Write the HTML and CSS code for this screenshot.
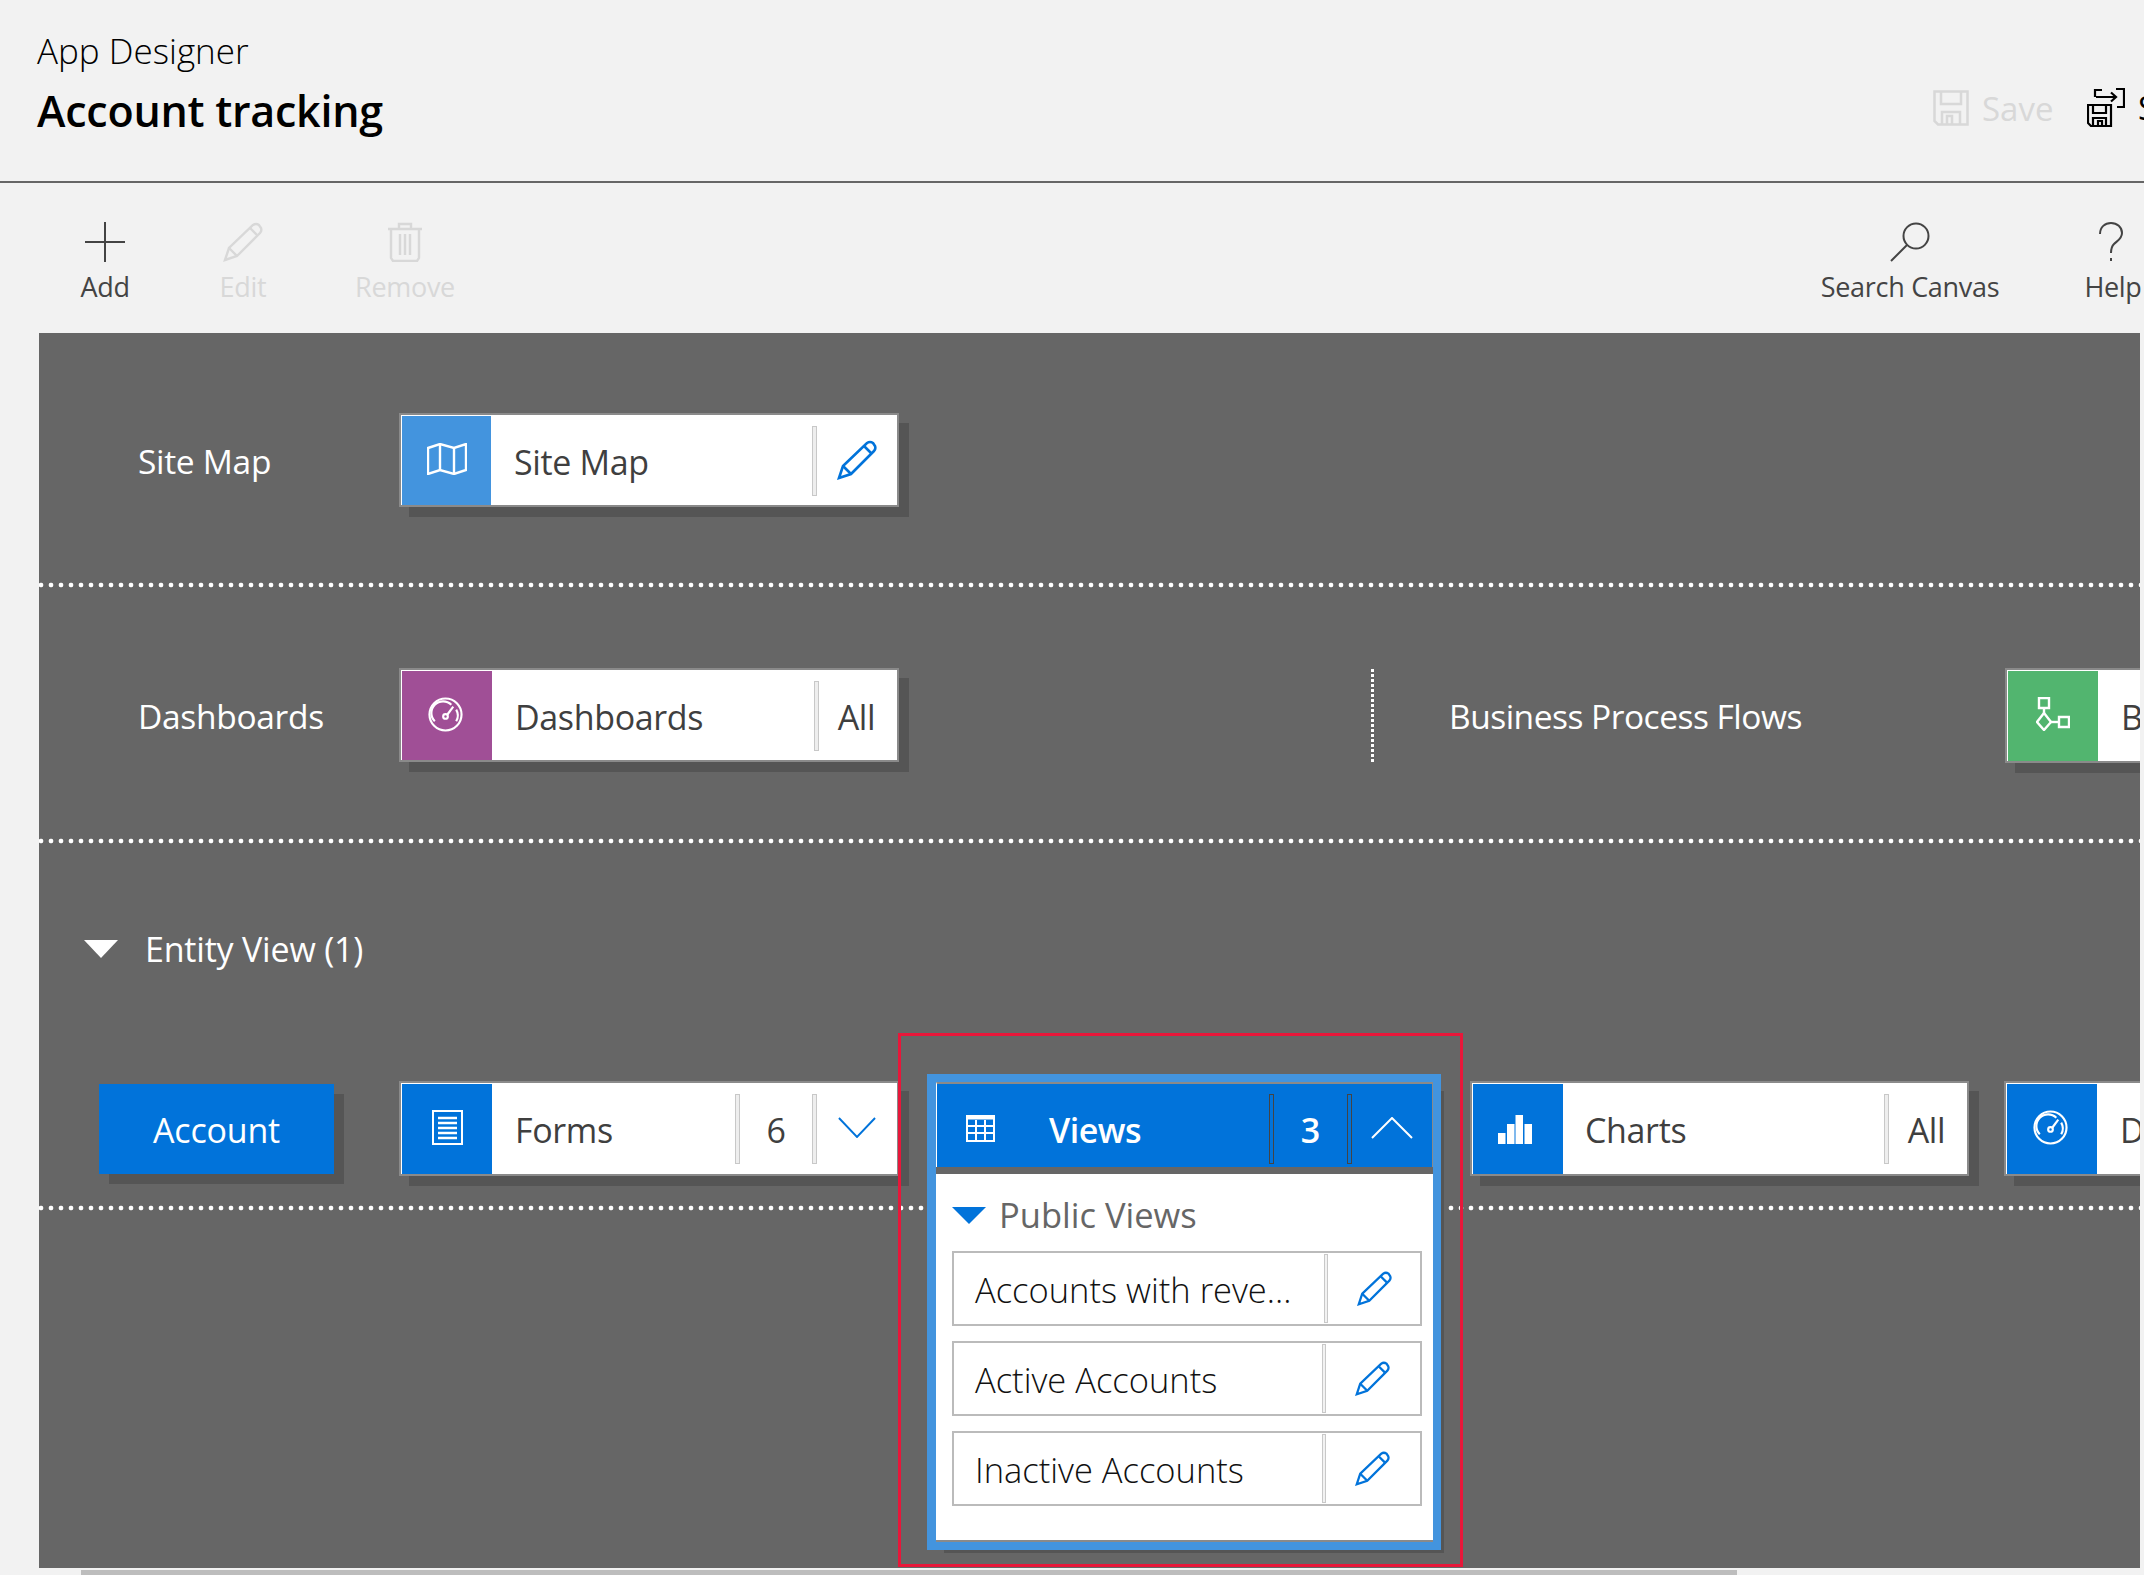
FILE: index.html
```html
<!DOCTYPE html>
<html lang="en">

<head>
    <meta charset="UTF-8">
    <meta name="viewport" content="width=device-width, initial-scale=1.0">
    <title>App Designer</title>
    <link rel="stylesheet" href="styles.css">
</head>

<body>
    <div class="page">

        <!-- title bar -->
        <header class="header">
            <div class="title-block">
                <div class="app-name">App Designer</div>
                <h1 class="app-title">Account tracking</h1>
            </div>
            <div class="save-actions">
                <svg class="save-icon" viewBox="0 0 36 36" fill="none" stroke="#d8d8d8" stroke-width="2.5">
                    <path d="M1.5 1.5H34.5V34.5H5L1.5 31Z" />
                    <path d="M8 1.5V14H28V1.5" />
                    <path d="M9 34.5V22H27V34.5" />
                    <path d="M14 34V26H19V34" />
                </svg>
                <span class="save-label">Save</span>
                <svg class="save-as-icon" viewBox="0 0 38 40" fill="none" stroke="#000" stroke-width="2.2">
                    <path d="M8 9V2H15" />
                    <path d="M29 1H37V19H30" />
                    <path d="M9 9H29M24 4.5L29 9L24 13.5" />
                    <path d="M1 17H24V38H4L1 35Z" />
                    <path d="M6 17V25H19V17" />
                    <path d="M6 38V30H19V38" />
                    <path d="M11 38V33H15V38" />
                </svg>
                <span class="save-as-label">Save As</span>
            </div>
        </header>

        <!-- command bar -->
        <nav class="toolbar">
            <div class="tool tool-add">
                <svg class="tool-icon" viewBox="0 0 40 40" fill="none" stroke="#444" stroke-width="2">
                    <path d="M0 20H40M20 0V40" />
                </svg>
                <span>Add</span>
            </div>
            <div class="tool tool-edit is-disabled">
                <svg class="tool-icon" viewBox="0 0 40 40" fill="none" stroke="#d8d8d8" stroke-width="2.4">
                    <path d="M2 38L6 26L30 3Q33 1 36 3L38 6Q39 9 37 11L14 34Z" />
                    <path d="M6 26L14 34M27 6L34 13" />
                </svg>
                <span>Edit</span>
            </div>
            <div class="tool tool-remove is-disabled">
                <svg class="tool-icon" viewBox="0 0 40 40" fill="none" stroke="#d8d8d8" stroke-width="2.4">
                    <path d="M3 7H37M14 7V2H26V7" />
                    <path d="M6 7V36L8 39H32L34 36V7" />
                    <path d="M15 12V33M20 12V33M25 12V33" />
                </svg>
                <span>Remove</span>
            </div>
            <div class="tool tool-search">
                <svg class="tool-icon" viewBox="0 0 40 40" fill="none" stroke="#444" stroke-width="2">
                    <circle cx="26" cy="14" r="12.5" />
                    <path d="M17 23L1 39" />
                </svg>
                <span>Search Canvas</span>
            </div>
            <div class="tool tool-help">
                <svg class="tool-icon" viewBox="0 0 24 40" fill="none" stroke="#444" stroke-width="2">
                    <path d="M1 12C1 5 6 1 12 1C18 1 23 5 23 11C23 17 18 19 15 22C13 24 12 26 12 31" />
                    <path d="M12 36V39" />
                </svg>
                <span>Help</span>
            </div>
        </nav>

        <!-- designer canvas -->
        <main class="canvas">

            <section class="lane">
                <div class="lane-label">Site Map</div>
                <div class="card card-short">
                    <div class="card-icon bg-sky">
                        <svg class="icon-map" viewBox="0 0 40 32" fill="none" stroke="#fff" stroke-width="2.4">
                            <path d="M1 5L13 1L27 5L39 1V27L27 31L13 27L1 31Z" />
                            <path d="M13 1V27M27 5V31" />
                        </svg>
                    </div>
                    <div class="card-name">Site Map</div>
                    <span class="sep"></span>
                    <div class="card-cell card-cell-end">
                        <svg class="icon-pencil" viewBox="0 0 40 40" fill="none" stroke="#0173da" stroke-width="2.6">
                            <path d="M2 38L6 26L30 3Q33 1 36 3L38 6Q39 9 37 11L14 34Z" />
                            <path d="M6 26L14 34M27 6L34 13" />
                        </svg>
                    </div>
                </div>
            </section>

            <div class="dots"></div>

            <section class="lane lane-tall">
                <div class="lane-label">Dashboards</div>
                <div class="card card-short">
                    <div class="card-icon card-icon-wide bg-purple">
                        <svg class="icon-gauge" viewBox="0 0 36 36" fill="none" stroke="#fff" stroke-width="2.2">
                            <circle cx="18" cy="18" r="16.5" />
                            <path d="M7 25A12 12 0 0 1 24 8" />
                            <path d="M29 13A12 12 0 0 1 29 25" />
                            <circle cx="18" cy="20" r="2.4" />
                            <path d="M20 18L26 10" />
                        </svg>
                    </div>
                    <div class="card-name">Dashboards</div>
                    <span class="sep"></span>
                    <div class="card-cell card-cell-all">All</div>
                </div>
                <div class="dots-vertical"></div>
                <div class="lane-label lane-label-bpf">Business Process Flows</div>
                <div class="card card-cut">
                    <div class="card-icon card-icon-wide bg-green">
                        <svg class="icon-flow" viewBox="0 0 34 34" fill="none" stroke="#fff" stroke-width="2.4">
                            <path d="M3 1H13V11H3Z" />
                            <path d="M8 11V16" />
                            <path d="M8 16L15 25L8 33L1 25Z" />
                            <path d="M15 25H23" />
                            <path d="M23 20H33V30H23Z" />
                        </svg>
                    </div>
                    <div class="card-name">Business Process Flows</div>
                </div>
            </section>

            <div class="dots"></div>

            <section class="entity">
                <div class="entity-head">
                    <svg class="entity-arrow" viewBox="0 0 34 18"><polygon points="0,0 34,0 17,18" fill="#fff" /></svg>
                    <span>Entity View (1)</span>
                </div>
                <div class="entity-row">
                    <div class="entity-button">Account</div>
                    <div class="card">
                        <div class="card-icon card-icon-wide bg-blue">
                            <svg class="icon-form" viewBox="0 0 31 35" fill="none" stroke="#fff" stroke-width="2">
                                <path d="M1 1H30V34H1Z" />
                                <path d="M6 8H25M6 13H25M6 18H25M6 23H25M6 28H25" stroke-width="2.4" />
                            </svg>
                        </div>
                        <div class="card-name">Forms</div>
                        <span class="sep"></span>
                        <div class="card-cell card-cell-count">6</div>
                        <span class="sep"></span>
                        <div class="card-cell card-cell-end">
                            <svg class="icon-chevron" viewBox="0 0 40 22" fill="none" stroke="#0173da" stroke-width="2">
                                <path d="M1 1L20 21L39 1" />
                            </svg>
                        </div>
                    </div>

                    <div class="popup-slot">
                        <div class="popup">
                            <div class="popup-head">
                                <svg class="icon-grid" viewBox="0 0 29 27" fill="none" stroke="#fff" stroke-width="2">
                                    <path d="M1 1H28V26H1Z" />
                                    <path d="M1 3H28" stroke-width="3" />
                                    <path d="M1 11H28M1 18H28M10 5V26M19 5V26" />
                                </svg>
                                <div class="popup-name">Views</div>
                                <span class="sep sep-dark"></span>
                                <div class="popup-count">3</div>
                                <span class="sep sep-dark"></span>
                                <div class="popup-toggle">
                                    <svg class="icon-chevron-up" viewBox="0 0 42 22" fill="none" stroke="#fff" stroke-width="2">
                                        <path d="M1 21L21 1L41 21" />
                                    </svg>
                                </div>
                            </div>
                            <div class="popup-body">
                                <div class="group-head">
                                    <svg class="group-arrow" viewBox="0 0 34 17"><polygon points="0,0 34,0 17,17" fill="#0173da" /></svg>
                                    <span>Public Views</span>
                                </div>
                                <div class="view-list">
                                    <div class="view-row view-row-long">
                                        <div class="view-name">Accounts with reve...</div>
                                        <span class="view-sep"></span>
                                        <div class="view-edit">
                                            <svg class="icon-pencil-small" viewBox="0 0 40 40" fill="none" stroke="#0173da" stroke-width="2.6">
                                                <path d="M2 38L6 26L30 3Q33 1 36 3L38 6Q39 9 37 11L14 34Z" />
                                                <path d="M6 26L14 34M27 6L34 13" />
                                            </svg>
                                        </div>
                                    </div>
                                    <div class="view-row">
                                        <div class="view-name">Active Accounts</div>
                                        <span class="view-sep"></span>
                                        <div class="view-edit">
                                            <svg class="icon-pencil-small" viewBox="0 0 40 40" fill="none" stroke="#0173da" stroke-width="2.6">
                                                <path d="M2 38L6 26L30 3Q33 1 36 3L38 6Q39 9 37 11L14 34Z" />
                                                <path d="M6 26L14 34M27 6L34 13" />
                                            </svg>
                                        </div>
                                    </div>
                                    <div class="view-row">
                                        <div class="view-name">Inactive Accounts</div>
                                        <span class="view-sep"></span>
                                        <div class="view-edit">
                                            <svg class="icon-pencil-small" viewBox="0 0 40 40" fill="none" stroke="#0173da" stroke-width="2.6">
                                                <path d="M2 38L6 26L30 3Q33 1 36 3L38 6Q39 9 37 11L14 34Z" />
                                                <path d="M6 26L14 34M27 6L34 13" />
                                            </svg>
                                        </div>
                                    </div>
                                </div>
                            </div>
                        </div>
                        <div class="callout"></div>
                    </div>

                    <div class="card card-charts">
                        <div class="card-icon card-icon-wide bg-blue">
                            <svg class="icon-bars" viewBox="0 0 34 29" fill="#fff">
                                <rect x="0" y="18" width="7.5" height="11" />
                                <rect x="9" y="9" width="7.5" height="20" />
                                <rect x="17.5" y="0" width="7.5" height="29" />
                                <rect x="26.5" y="9" width="7.5" height="20" />
                            </svg>
                        </div>
                        <div class="card-name">Charts</div>
                        <span class="sep"></span>
                        <div class="card-cell card-cell-all">All</div>
                    </div>
                    <div class="card card-cut">
                        <div class="card-icon card-icon-wide bg-blue">
                            <svg class="icon-gauge" viewBox="0 0 36 36" fill="none" stroke="#fff" stroke-width="2.2">
                                <circle cx="18" cy="18" r="16.5" />
                                <path d="M7 25A12 12 0 0 1 24 8" />
                                <path d="M29 13A12 12 0 0 1 29 25" />
                                <circle cx="18" cy="20" r="2.4" />
                                <path d="M20 18L26 10" />
                            </svg>
                        </div>
                        <div class="card-name">Dashboards</div>
                    </div>
                </div>
            </section>

            <div class="dots dots-last"></div>
        </main>

        <div class="scroll-track">
            <div class="scroll-thumb"></div>
        </div>
    </div>
</body>

</html>
```

FILE: styles.css
```css
html,
body {
    margin: 0;
    padding: 0;
}

body {
    background-color: #f2f2f2;
    font-family: "Open Sans", "Noto Sans", sans-serif;
    overflow: hidden;
}

.page {
    width: 2144px;
    height: 1575px;
    overflow: hidden;
}

/* title bar */
.header {
    display: flex;
    justify-content: space-between;
    height: 181px;
    border-bottom: 2px solid #666;
    padding-left: 37px;
}

.title-block {
    padding-top: 26px;
}

.app-name {
    font-size: 35px;
    line-height: 50px;
    font-weight: 300;
    color: #000;
}

.app-title {
    margin: 5px 0 0;
    font-size: 43px;
    line-height: 60px;
    font-weight: 600;
    letter-spacing: -0.25px;
    color: #000;
}

.save-actions {
    display: flex;
    flex-shrink: 0;
    align-items: center;
    width: 211px;
    height: 39px;
    margin-top: 88px;
    overflow: hidden;
    white-space: nowrap;
    font-size: 33px;
}

.save-icon {
    width: 36px;
    height: 36px;
    flex-shrink: 0;
    margin-right: 13px;
}

.save-label {
    width: 70px;
    flex-shrink: 0;
    margin-top: 2px;
    color: #d8d8d8;
}

.save-as-icon {
    width: 38px;
    height: 40px;
    flex-shrink: 0;
    margin-left: 35px;
    margin-right: 13px;
}

/* command bar */
.toolbar {
    display: flex;
    height: 150px;
}

.tool {
    display: flex;
    flex-direction: column;
    flex-shrink: 0;
    align-items: center;
    padding-top: 39px;
    font-size: 27px;
    line-height: 36px;
    letter-spacing: -0.3px;
    color: #444;
    white-space: nowrap;
}

.tool-icon {
    width: 40px;
    height: 40px;
    margin-bottom: 7px;
}

.is-disabled {
    color: #d8d8d8;
}

.tool-add {
    width: 90px;
    margin-left: 60px;
}

.tool-edit {
    width: 186px;
}

.tool-remove {
    width: 138px;
}

.tool-search {
    width: 200px;
    margin-left: 1336px;
}

.tool-help {
    width: 206px;
}

.tool-help .tool-icon {
    width: 24px;
    margin-left: -4px;
}

/* canvas */
.canvas {
    width: 2101px;
    height: 1235px;
    margin-left: 39px;
    background-color: #666;
    overflow: hidden;
}

.lane {
    display: flex;
    height: 169px;
    padding-top: 80px;
    padding-left: 99px;
    width: 2200px;
}

.lane-tall {
    height: 170px;
}

.lane-label {
    width: 261px;
    flex-shrink: 0;
    font-size: 33.5px;
    line-height: 97px;
    letter-spacing: -0.3px;
    color: #fff;
}

.lane-label-bpf {
    width: 556px;
    letter-spacing: -0.5px;
}

.dots {
    height: 6px;
    background: radial-gradient(circle at center, #fff 2px, transparent 2.7px) -3px center / 10px 6px repeat-x;
}

.dots-last {
    margin-top: 29px;
}

.dots-vertical {
    width: 5px;
    height: 95px;
    flex-shrink: 0;
    margin-left: 471px;
    margin-right: 74px;
    background: radial-gradient(circle at center, #fff 1.6px, transparent 2px) center top / 5px 5px repeat-y;
}

/* cards */
.card {
    display: flex;
    flex-shrink: 0;
    box-sizing: border-box;
    width: 500px;
    height: 95px;
    border: 2px solid #8a8a8a;
    background-color: #fff;
    box-shadow: 10px 10px 0 #555;
    font-size: 34px;
    letter-spacing: -0.35px;
    color: #3f3f3f;
    white-space: nowrap;
    overflow: visible;
}

.card-short {
    height: 94px;
}

.card-cut {
    width: 400px;
    overflow: hidden;
}

.card-charts {
    width: 499px;
    margin-right: 35px;
}

.card-charts .card-name {
    padding-left: 22px;
}

.card-icon {
    display: flex;
    flex-shrink: 0;
    align-items: center;
    justify-content: center;
    width: 89px;
    margin: 1px 0 0 1px;
}

.card-icon-wide {
    width: 90px;
}

.bg-sky {
    background-color: #4394de;
}

.bg-purple {
    background-color: #a04f96;
}

.bg-green {
    background-color: #52b56f;
}

.bg-blue {
    background-color: #0173da;
}

.card-name {
    flex: 1;
    padding-left: 23px;
    line-height: 95px;
}

.sep {
    flex-shrink: 0;
    box-sizing: border-box;
    width: 5px;
    height: 70px;
    margin-top: 11px;
    border: 1px solid #c8c8c8;
    background-color: #eee;
}

.sep-dark {
    margin-top: 10px;
    border-color: #444;
    background-color: #0173da;
}

.card-cell {
    flex-shrink: 0;
    text-align: center;
    line-height: 95px;
}

.card-cell-end {
    display: flex;
    align-items: center;
    justify-content: center;
    width: 80px;
}

.card-cell-all {
    box-sizing: border-box;
    width: 78px;
    padding-right: 3px;
}

.card-cell-count {
    width: 72px;
}

.icon-map {
    width: 40px;
    height: 32px;
    margin-top: -3px;
}

.icon-gauge {
    width: 35px;
    height: 35px;
    margin-top: -3px;
    margin-left: -3px;
}

.icon-flow {
    width: 34px;
    height: 34px;
    margin-top: -4px;
}

.icon-form {
    width: 31px;
    height: 35px;
    margin-top: -4px;
}

.icon-bars {
    width: 34px;
    height: 29px;
    margin-left: -6px;
}

.icon-pencil {
    width: 40px;
    height: 40px;
    margin-top: -1px;
}

.icon-chevron {
    width: 38px;
    height: 21px;
    margin-top: -3px;
}

/* entity section */
.entity-head {
    display: flex;
    align-items: center;
    height: 40px;
    padding-top: 85px;
    padding-bottom: 2px;
    padding-left: 45px;
    font-size: 34px;
    letter-spacing: -0.2px;
    color: #fff;
}

.entity-arrow {
    width: 34px;
    height: 18px;
    margin-right: 27px;
}

.entity-row {
    display: flex;
    padding-top: 110px;
    padding-left: 60px;
}

.entity-button {
    flex-shrink: 0;
    width: 235px;
    height: 90px;
    margin-top: 3px;
    margin-right: 65px;
    background-color: #0173da;
    box-shadow: 10px 10px 0 #555;
    font-size: 34px;
    line-height: 92px;
    letter-spacing: -0.2px;
    text-align: center;
    color: #fff;
}

/* expanded views tile */
.popup-slot {
    position: relative;
    flex-shrink: 0;
    width: 571px;
}

.popup {
    position: absolute;
    left: 28px;
    top: -7px;
    z-index: 1;
    display: flex;
    flex-direction: column;
    box-sizing: border-box;
    width: 514px;
    height: 476px;
    border: 8px solid #4394de;
    border-left-width: 9px;
    box-shadow: 10px 10px 0 -7px #555;
}

.popup-head {
    display: flex;
    flex-shrink: 0;
    align-items: flex-start;
    box-sizing: border-box;
    height: 85px;
    border-top: 2px solid #8a8a8a;
    border-left: 1px solid #fff;
    border-right: 1px solid #8a8a8a;
    background-color: #0173da;
    font-size: 34px;
    line-height: 92px;
    color: #fff;
}

.icon-grid {
    width: 29px;
    height: 27px;
    flex-shrink: 0;
    margin-top: 31px;
    margin-left: 29px;
}

.popup-name {
    flex: 1;
    margin-left: 54px;
    font-weight: 600;
    letter-spacing: -0.5px;
}

.popup-count {
    width: 73px;
    flex-shrink: 0;
    font-weight: 600;
    text-align: center;
}

.popup-toggle {
    display: flex;
    flex-shrink: 0;
    justify-content: center;
    width: 80px;
    padding-top: 33px;
}

.icon-chevron-up {
    width: 42px;
    height: 22px;
}

.popup-body {
    flex: 1;
    margin-top: 7px;
    padding: 20px 11px 0 16px;
    border-bottom: 2px solid #8a8a8a;
    background-color: #fff;
}

.group-head {
    display: flex;
    align-items: center;
    height: 40px;
    margin-bottom: 17px;
    font-size: 34.5px;
    color: #666;
}

.group-arrow {
    width: 34px;
    height: 17px;
    margin-top: 2px;
    margin-right: 13px;
}

.view-list {
    display: flex;
    flex-direction: column;
    gap: 15px;
}

.view-row {
    display: flex;
    box-sizing: border-box;
    height: 75px;
    border: 2px solid #bbb;
}

.view-name {
    flex: 1;
    padding-left: 21px;
    font-size: 34.5px;
    line-height: 74px;
    font-weight: 300;
    color: #111;
    white-space: nowrap;
}

.view-sep {
    flex-shrink: 0;
    box-sizing: border-box;
    width: 4px;
    height: 69px;
    margin-top: 1px;
    border: 1px solid #c8c8c8;
    background-color: #f2f2f2;
}

.view-edit {
    display: flex;
    flex-shrink: 0;
    justify-content: center;
    width: 94px;
    padding-top: 18px;
    padding-right: 2px;
    box-sizing: border-box;
}

.view-row-long .view-edit {
    width: 92px;
    padding-right: 0;
}

.icon-pencil-small {
    width: 35px;
    height: 35px;
}

/* red annotation box */
.callout {
    position: absolute;
    left: -1px;
    top: -48px;
    z-index: 2;
    box-sizing: border-box;
    width: 565px;
    height: 534px;
    border: 3px solid #e8173a;
    pointer-events: none;
}

/* horizontal scrollbar */
.scroll-track {
    height: 5px;
    margin-top: 2px;
    padding-left: 81px;
}

.scroll-thumb {
    width: 1656px;
    height: 5px;
    background-color: #bdbdbd;
}
```
